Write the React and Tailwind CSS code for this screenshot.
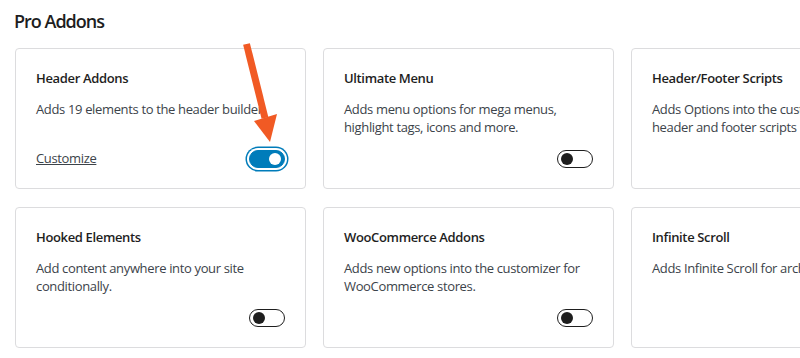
import React from "react";

const addons = [
    { title: "Header Addons", desc: ["Adds 19 elements to the header builder"], customize: true, on: true },
    { title: "Ultimate Menu", desc: ["Adds menu options for mega menus,", "highlight tags, icons and more."] },
    { title: "Header/Footer Scripts", desc: ["Adds Options into the customizer for", "header and footer scripts"] },
    { title: "Hooked Elements", desc: ["Add content anywhere into your site", "conditionally."] },
    { title: "WooCommerce Addons", desc: ["Adds new options into the customizer for", "WooCommerce stores."] },
    { title: "Infinite Scroll", desc: ["Adds Infinite Scroll for archives."] },
];

function Toggle({ on }) {
    if (on) {
        return (
            <span className="flex items-center w-[36px] h-[18px] rounded-full bg-[#007cba] border border-[#007cba] shadow-[0_0_0_2px_#fff,0_0_0_3.5px_#007cba] justify-end pr-[3px]">
                <span className="w-[12px] h-[12px] rounded-full bg-white" />
            </span>
        );
    }
    return (
        <span className="flex items-center w-[36px] h-[18px] rounded-full bg-white border border-[#1e1e1e] pl-[3px]">
            <span className="w-[12px] h-[12px] rounded-full bg-[#1e1e1e]" />
        </span>
    );
}

function AddonCard({ a }) {
    return (
        <div className="flex flex-col h-[141px] border border-[#dcdcde] rounded-[4px] bg-white p-5 overflow-hidden tracking-[-0.35px]">
            <h3 className="text-[13px] leading-[18px] font-semibold text-[#1e1e1e] whitespace-nowrap">{a.title}</h3>
            <p className="mt-[13px] text-[13px] leading-[18px] text-[#3c434a] whitespace-nowrap">
                {a.desc.map((line, i) => (
                    <span key={i} className="block">{line}</span>
                ))}
            </p>
            <div className="mt-auto flex items-center justify-between h-[18px]">
                {a.customize ? (
                    <a href="#" className="text-[13px] underline text-[#3c434a]">Customize</a>
                ) : <span />}
                <Toggle on={a.on} />
            </div>
        </div>
    );
}

export default function App() {
    return (
        <div className="relative w-[800px] h-[358px] overflow-hidden bg-white font-['Open_Sans',sans-serif]">
            <h2 className="pl-[14px] pt-[11px] text-[18px] leading-[20px] font-semibold tracking-[-1px] text-[#1e1e1e]">Pro Addons</h2>

            <div className="grid grid-cols-[291px_291px_291px] gap-x-[17px] gap-y-[18px] ml-[15px] mt-[17px]">
                {addons.map((a) => (
                    <AddonCard key={a.title} a={a} />
                ))}
            </div>

            {/* arrow pointing at the toggle */}
            <svg className="absolute left-0 top-0 pointer-events-none" width="800" height="358">
                <line x1="246.5" y1="44" x2="265" y2="118" stroke="#f15a24" strokeWidth="7" />
                <polygon points="254,121 277,114 270,142" fill="#f15a24" />
            </svg>
        </div>
    );
}
